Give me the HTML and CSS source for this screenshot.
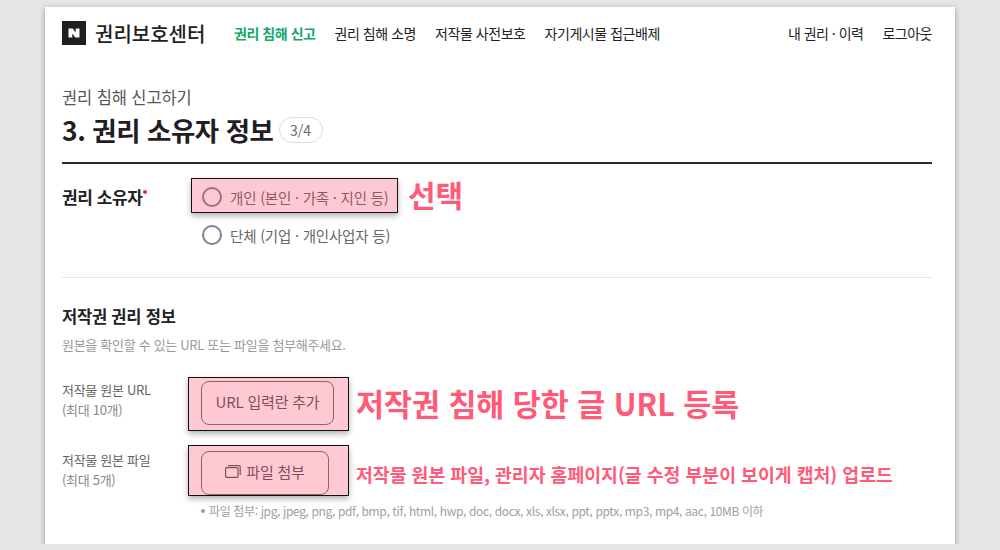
FILE: index.html
```html
<!DOCTYPE html>
<html lang="ko">

<head>
  <title>권리보호센터</title>
  <meta charset="utf-8">
  <link rel="stylesheet" href="styles.css">
</head>

<body>
  <div class="page">
    <header class="top">
      <div class="logo">
        <svg class="logo-n" width="24" height="24" viewBox="0 0 24 24">
          <rect width="24" height="24" fill="#1e1e23"/>
          <path d="M6.500 7.500h4.200l3 4V7.500h3.800v9h-4.200l-3-4v4H6.500z" fill="#fff"/>
        </svg>
        <span class="logo-text">권리보호센터</span>
      </div>
      <nav class="gnb">
        <a class="on">권리 침해 신고</a>
        <a>권리 침해 소명</a>
        <a>저작물 사전보호</a>
        <a>자기게시물 접근배제</a>
      </nav>
      <div class="util">
        <a>내 권리 · 이력</a>
        <a>로그아웃</a>
      </div>
    </header>

    <p class="sub-title">권리 침해 신고하기</p>
    <div class="title-row">
      <h1>3. 권리 소유자 정보</h1>
      <span class="step">3/4</span>
    </div>

    <section class="owner">
      <div class="label-strong">권리 소유자<i class="req"></i></div>
      <div class="radios">
        <label class="radio"><span class="circle"></span>개인 (본인 · 가족 · 지인 등)</label>
        <label class="radio"><span class="circle"></span>단체 (기업 · 개인사업자 등)</label>
      </div>
    </section>

    <section class="info">
      <h2>저작권 권리 정보</h2>
      <p class="desc">원본을 확인할 수 있는 URL 또는 파일을 첨부해주세요.</p>

      <div class="field field-url">
        <div class="field-label">저작물 원본 URL<br><span>(최대 10개)</span></div>
        <button class="btn btn-url">URL 입력란 추가</button>
      </div>
      <div class="field field-file">
        <div class="field-label">저작물 원본 파일<br><span>(최대 5개)</span></div>
        <button class="btn btn-file">
          <svg width="16" height="13" viewBox="0 0 16 13" fill="none" stroke="#555" stroke-width="1.2">
            <rect x="0.6" y="2.600" width="12.400" height="9.800" rx="1"/>
            <path d="M2.800 0.700h11.400a1 1 0 0 1 1 1v8.300"/>
          </svg>
          파일 첨부
        </button>
      </div>
      <p class="note">파일 첨부: jpg, jpeg, png, pdf, bmp, tif, html, hwp, doc, docx, xls, xlsx, ppt, pptx, mp3, mp4, aac, 10MB 이하</p>
    </section>

    <!-- 캡처 위에 덧붙인 표시 -->
    <div class="mark mark-1"></div>
    <div class="mark mark-2"></div>
    <div class="mark mark-3"></div>
    <div class="memo memo-1">선택</div>
    <div class="memo memo-2">저작권 침해 당한 글 URL 등록</div>
    <div class="memo memo-3">저작물 원본 파일, 관리자 홈페이지(글 수정 부분이 보이게 캡처) 업로드</div>
  </div>
</body>

</html>
```

FILE: styles.css
```css
* {
  margin: 0;
  padding: 0;
  box-sizing: border-box;
}

body {
  background: #e6e6e6;
  font-family: "Noto Sans CJK KR", "Noto Sans", sans-serif;
  color: #222;
  overflow: hidden;
}

.page {
  position: relative;
  width: 910px;
  height: 537px;
  margin: 7px 0 0 45px;
  padding: 0 23px 0 17px;
  background: #fff;
  box-shadow: 0 2px 6px rgba(0, 0, 0, .35);
}

/* header */
.top {
  display: flex;
  align-items: center;
  height: 51px;
  padding-top: 1px;
}

.logo {
  display: flex;
  align-items: center;
  width: 172px;
}

.logo-text {
  margin-left: 9px;
  font-size: 20px;
  font-weight: 500;
  color: #1e1e23;
}

.gnb {
  display: flex;
  gap: 19px;
  font-size: 14px;
  letter-spacing: -.45px;
}

.gnb .on {
  color: #0fa968;
  font-weight: 700;
}

.util {
  display: flex;
  gap: 19px;
  margin-left: auto;
  font-size: 14px;
  letter-spacing: -.5px;
}

/* title */
.sub-title {
  margin-top: 27px;
  font-size: 16.500px;
  line-height: 24px;
  color: #555;
  letter-spacing: -.1px;
}

.title-row {
  display: flex;
  align-items: center;
  height: 38px;
  margin-top: 2px;
  padding-bottom: 1px;
}

h1 {
  font-size: 26.400px;
  font-weight: 700;
  letter-spacing: -.4px;
  color: #1e1e23;
}

.step {
  display: block;
  width: 44px;
  height: 26px;
  margin-left: 5px;
  border: 1px solid #ddd;
  border-radius: 13px;
  font-size: 14px;
  line-height: 24px;
  text-align: center;
  color: #666;
}

/* owner */
.owner {
  display: flex;
  margin-top: 13px;
  padding: 22px 0 31px;
  border-top: 2px solid #2a2a2a;
  border-bottom: 1px solid #e6e6e6;
}

.label-strong {
  width: 140px;
  font-size: 17px;
  font-weight: 700;
  line-height: 22px;
  letter-spacing: -.4px;
}

.req {
  display: inline-block;
  width: 4px;
  height: 4px;
  vertical-align: 10px;
  border-radius: 50%;
  background: #f0283c;
}

.radios {
  display: flex;
  flex-direction: column;
  gap: 16px;
}

.radio {
  display: flex;
  align-items: center;
  gap: 8px;
  height: 22px;
  font-size: 14.500px;
  letter-spacing: -.2px;
  color: #666;
}

.circle {
  width: 20px;
  height: 20px;
  border: 2px solid #7c8290;
  border-radius: 50%;
}

/* info */
.info {
  padding-top: 26px;
}

h2 {
  font-size: 16.500px;
  font-weight: 700;
  line-height: 24px;
  letter-spacing: -.2px;
}

.desc {
  margin-top: 7px;
  font-size: 13px;
  line-height: 20px;
  letter-spacing: -.3px;
  color: #999;
}

.field {
  display: flex;
}

.field-url {
  margin-top: 26px;
}

.field-file {
  margin-top: 26px;
}

.field-label {
  width: 139px;
  margin-top: -1px;
  font-size: 13px;
  line-height: 20px;
  letter-spacing: -.3px;
  color: #666;
}

.field-label span {
  color: #888;
}

.btn {
  display: flex;
  align-items: center;
  justify-content: center;
  gap: 5px;
  height: 44px;
  padding-bottom: 3px;
  background: #fff;
  border: 1px solid #6e6e6e;
  border-radius: 8px;
  font-family: inherit;
  font-size: 15px;
  letter-spacing: -.2px;
  color: #555;
}

.btn-url {
  width: 133px;
}

.btn-file {
  width: 128px;
}

.note {
  margin: 6px 0 0 139px;
  font-size: 12px;
  line-height: 20px;
  letter-spacing: -.37px;
  color: #a0a0a0;
}

.note::before {
  content: "";
  display: inline-block;
  width: 4px;
  height: 4px;
  margin-right: 4px;
  vertical-align: 3px;
  border-radius: 50%;
  background: #999;
}

/* 표시 */
.mark {
  position: absolute;
  background: rgba(255, 60, 100, .28);
  border: 1.500px solid #111;
  box-shadow: 0 3px 6px rgba(0, 0, 0, .3);
}

.mark-1 {
  left: 146px;
  top: 171px;
  width: 207px;
  height: 35px;
}

.mark-2 {
  left: 143px;
  top: 370px;
  width: 161px;
  height: 54px;
}

.mark-3 {
  left: 143px;
  top: 438px;
  width: 161px;
  height: 51px;
}

.memo {
  position: absolute;
  font-weight: 700;
  color: #ff5a78;
  white-space: nowrap;
}

.memo-1 {
  left: 363px;
  top: 166px;
  font-size: 30px;
  line-height: 42px;
}

.memo-2 {
  left: 311px;
  top: 374px;
  font-size: 30.400px;
  line-height: 44px;
}

.memo-3 {
  left: 311px;
  top: 452px;
  font-size: 18.300px;
  line-height: 30px;
}
```
